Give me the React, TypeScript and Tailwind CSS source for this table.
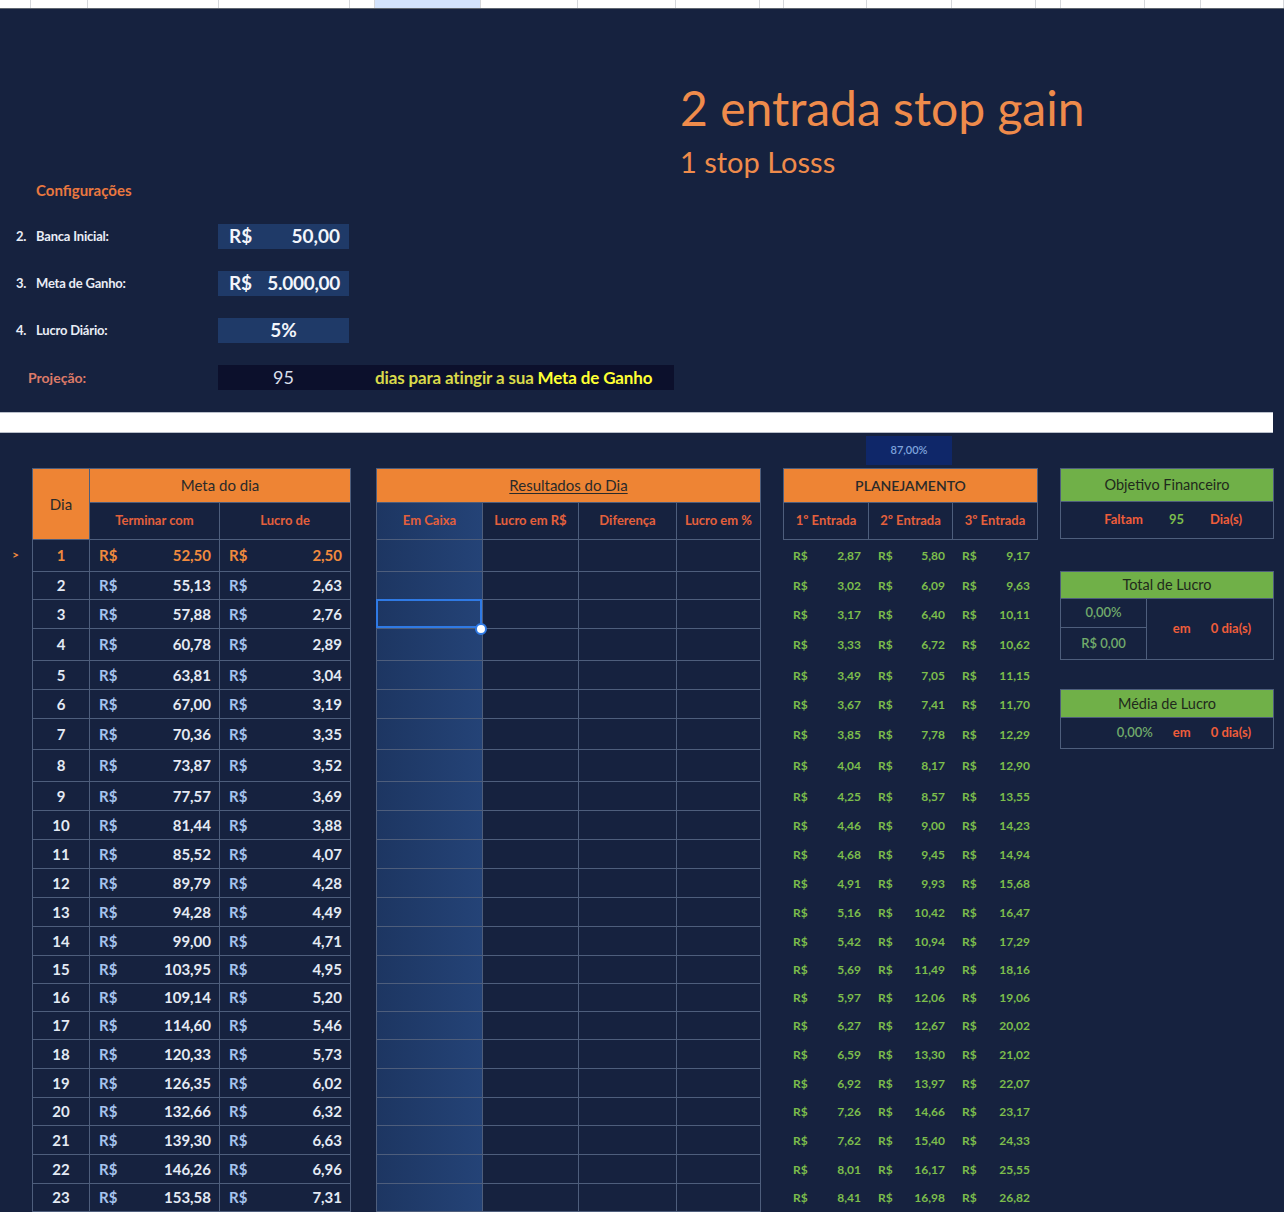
import React from 'react';

// Planilha de gestão de banca: configurações, meta diária, resultados e planejamento.

const rowH = [
  'h-[32px]', 'h-[28px]', 'h-[29px]', 'h-[32px]', 'h-[29px]', 'h-[29px]', 'h-[31px]', 'h-[32px]',
  'h-[29px]', 'h-[29px]', 'h-[29px]', 'h-[29px]', 'h-[29px]', 'h-[29px]', 'h-[28px]', 'h-[28px]',
  'h-[28px]', 'h-[29px]', 'h-[29px]', 'h-[28px]', 'h-[29px]', 'h-[29px]', 'h-[28px]',
];

const terminar = [
  '52,50', '55,13', '57,88', '60,78', '63,81', '67,00', '70,36', '73,87', '77,57', '81,44', '85,52', '89,79',
  '94,28', '99,00', '103,95', '109,14', '114,60', '120,33', '126,35', '132,66', '139,30', '146,26', '153,58',
];
const lucro = [
  '2,50', '2,63', '2,76', '2,89', '3,04', '3,19', '3,35', '3,52', '3,69', '3,88', '4,07', '4,28',
  '4,49', '4,71', '4,95', '5,20', '5,46', '5,73', '6,02', '6,32', '6,63', '6,96', '7,31',
];
const entrada1 = [
  '2,87', '3,02', '3,17', '3,33', '3,49', '3,67', '3,85', '4,04', '4,25', '4,46', '4,68', '4,91',
  '5,16', '5,42', '5,69', '5,97', '6,27', '6,59', '6,92', '7,26', '7,62', '8,01', '8,41',
];
const entrada2 = [
  '5,80', '6,09', '6,40', '6,72', '7,05', '7,41', '7,78', '8,17', '8,57', '9,00', '9,45', '9,93',
  '10,42', '10,94', '11,49', '12,06', '12,67', '13,30', '13,97', '14,66', '15,40', '16,17', '16,98',
];
const entrada3 = [
  '9,17', '9,63', '10,11', '10,62', '11,15', '11,70', '12,29', '12,90', '13,55', '14,23', '14,94', '15,68',
  '16,47', '17,29', '18,16', '19,06', '20,02', '21,02', '22,07', '23,17', '24,33', '25,55', '26,82',
];

const stripCols = [
  'w-[31px]', 'w-[57px]', 'w-[131px]', 'w-[131px]', 'w-[25px]', 'w-[106px]', 'w-[97px]', 'w-[98px]',
  'w-[84px]', 'w-[24px]', 'w-[83px]', 'w-[85px]', 'w-[84px]', 'w-[25px]', 'w-[84px]', 'w-[56px]', 'flex-1',
];

function SheetStrip() {
  return (
    <div className="flex h-[8px] bg-white">
      {stripCols.map((w, i) => (
        <div
          key={i}
          className={`${w} h-full border-r border-[#d5d7db] ${i === 5 ? 'bg-[#d3e3fd]' : ''}`}
        />
      ))}
    </div>
  );
}

function ConfigRow({ num, label, children }: { num: string; label: string; children: React.ReactNode }) {
  return (
    <div className="flex h-[25px] items-center">
      <div className="flex w-[218px] items-center text-[13px] font-bold tracking-[-0.2px] text-[#e9edf6]">
        <span className="w-[36px] pl-[16px]">{num}</span>
        <span>{label}</span>
      </div>
      {children}
    </div>
  );
}

function Header() {
  return (
    <section className="flex h-[403px] flex-col">
      <div className="pl-[680px] pt-[71px] text-[#ef8b4b]">
        <div className="text-[48px] leading-[56px]">2 entrada stop gain</div>
        <div className="mt-[9px] text-[29px] leading-[34px]">1 stop Losss</div>
      </div>
      <div className="mt-[1px] pl-[36px] text-[15px] font-bold leading-[20px] text-[#e9783f]">Configurações</div>
      <div className="mt-[24px] flex flex-col gap-[22px]">
        <ConfigRow num="2." label="Banca Inicial:">
          <div className="flex h-full w-[131px] items-center justify-between bg-[#1f3a68] pl-[11px] pr-[9px] text-[19px] font-bold text-[#f2f5fb]">
            <span>R$</span>
            <span>50,00</span>
          </div>
        </ConfigRow>
        <ConfigRow num="3." label="Meta de Ganho:">
          <div className="flex h-full w-[131px] items-center justify-between bg-[#1f3a68] pl-[11px] pr-[9px] text-[19px] font-bold tracking-[-0.3px] text-[#f2f5fb]">
            <span>R$</span>
            <span>5.000,00</span>
          </div>
        </ConfigRow>
        <ConfigRow num="4." label="Lucro Diário:">
          <div className="flex h-full w-[131px] items-center justify-center bg-[#1f3a68] text-[19px] font-bold text-[#f2f5fb]">
            5%
          </div>
        </ConfigRow>
        <div className="flex h-[25px] items-center">
          <div className="w-[218px] pl-[28px] text-[14px] font-bold text-[#dd7a68]">Projeção:</div>
          <div className="flex h-full w-[456px] items-center bg-[#0c102c]">
            <span className="w-[131px] text-center text-[18px] text-[#d9dfea]">95</span>
            <span className="pl-[26px] text-[17px] font-bold tracking-[-0.15px] text-[#d9d94a]">
              dias para atingir a sua <span className="text-[#ffff33]">Meta de Ganho</span>
            </span>
          </div>
        </div>
      </div>
    </section>
  );
}

function MetaTable() {
  return (
    <div className="w-[319px] border-l border-t border-[#4e5e7c]">
      <div className="flex h-[71px]">
        <div className="flex w-[57px] items-center justify-center border-b border-r border-[#4e5e7c] bg-[#ee8434] text-[15px] text-[#2a2a2a]">
          Dia
        </div>
        <div className="flex flex-col">
          <div className="flex h-[34px] w-[261px] items-center justify-center border-b border-r border-[#4e5e7c] bg-[#ee8434] text-[15px] text-[#2a2a2a]">
            Meta do dia
          </div>
          <div className="flex h-[37px] text-[13px] font-bold text-[#e4603c]">
            <div className="flex w-[130px] items-center justify-center border-b border-r border-[#4e5e7c]">Terminar com</div>
            <div className="flex w-[131px] items-center justify-center border-b border-r border-[#4e5e7c]">Lucro de</div>
          </div>
        </div>
      </div>
      {rowH.map((h, i) => {
        const first = i === 0;
        const money = first ? 'text-[#f08a3e]' : 'text-[#a6c4ee]';
        const value = first ? 'text-[#f08a3e]' : 'text-[#e4eaf4]';
        return (
          <div key={i} className={`flex ${h} text-[15px] font-bold`}>
            <div className={`flex w-[57px] items-center justify-center border-b border-r border-[#4e5e7c] ${value}`}>
              {i + 1}
            </div>
            <div className="flex w-[130px] items-center justify-between border-b border-r border-[#4e5e7c] pl-[9px] pr-[8px]">
              <span className={money}>R$</span>
              <span className={value}>{terminar[i]}</span>
            </div>
            <div className="flex w-[131px] items-center justify-between border-b border-r border-[#4e5e7c] pl-[9px] pr-[8px]">
              <span className={money}>R$</span>
              <span className={value}>{lucro[i]}</span>
            </div>
          </div>
        );
      })}
    </div>
  );
}

function ResultadosTable() {
  return (
    <div className="ml-[25px] w-[385px] border-l border-t border-[#4e5e7c]">
      <div className="flex h-[34px] items-center justify-center border-b border-r border-[#4e5e7c] bg-[#ee8434] text-[15px] text-[#2a2a2a] underline underline-offset-2">
        Resultados do Dia
      </div>
      <div className="flex h-[37px] text-[13px] font-bold text-[#e4603c]">
        <div className="flex w-[106px] items-center justify-center border-b border-r border-[#4e5e7c] bg-linear-to-r from-[#1d3662] to-[#244377]">
          Em Caixa
        </div>
        <div className="flex w-[96px] items-center justify-center border-b border-r border-[#4e5e7c]">Lucro em R$</div>
        <div className="flex w-[98px] items-center justify-center border-b border-r border-[#4e5e7c]">Diferença</div>
        <div className="flex w-[84px] items-center justify-center border-b border-r border-[#4e5e7c]">Lucro em %</div>
      </div>
      {rowH.map((h, i) => (
        <div key={i} className={`flex ${h}`}>
          <div className="relative w-[106px] border-b border-r border-[#4e5e7c] bg-linear-to-r from-[#1d3662] to-[#244377]">
            {i === 2 && (
              <>
                <div className="absolute -left-px -top-px bottom-0 right-0 border-2 border-[#2f7ae5]" />
                <div className="absolute -bottom-[7px] -right-[5px] z-10 h-[12px] w-[12px] rounded-full border-2 border-[#2f7ae5] bg-white" />
              </>
            )}
          </div>
          <div className="w-[96px] border-b border-r border-[#4e5e7c]" />
          <div className="w-[98px] border-b border-r border-[#4e5e7c]" />
          <div className="w-[84px] border-b border-r border-[#4e5e7c]" />
        </div>
      ))}
    </div>
  );
}

function MoneyPair({ value, width }: { value: string; width: string }) {
  return (
    <div className={`flex ${width} items-center justify-between pl-[9px] pr-[8px]`}>
      <span>R$</span>
      <span>{value}</span>
    </div>
  );
}

function PlanejamentoTable() {
  return (
    <div className="ml-[22px] w-[255px]">
      <div className="border-l border-t border-[#4e5e7c]">
        <div className="flex h-[34px] items-center justify-center border-b border-r border-[#4e5e7c] bg-[#ee8434] text-[14px] font-semibold text-[#2a2a2a]">
          PLANEJAMENTO
        </div>
        <div className="flex h-[37px] text-[13px] font-bold text-[#e4603c]">
          <div className="flex w-[85px] items-center justify-center border-b border-r border-[#4e5e7c]">1º Entrada</div>
          <div className="flex w-[84px] items-center justify-center border-b border-r border-[#4e5e7c]">2º Entrada</div>
          <div className="flex w-[85px] items-center justify-center border-b border-r border-[#4e5e7c]">3º Entrada</div>
        </div>
      </div>
      {rowH.map((h, i) => (
        <div key={i} className={`flex ${h} pl-px text-[12px] font-bold text-[#7cbd4c]`}>
          <MoneyPair value={entrada1[i]} width="w-[85px]" />
          <MoneyPair value={entrada2[i]} width="w-[84px]" />
          <MoneyPair value={entrada3[i]} width="w-[85px]" />
        </div>
      ))}
    </div>
  );
}

function ResumoPanel() {
  return (
    <div className="ml-[22px] w-[214px] text-[13px] font-bold">
      <div className="border-x border-[#4e5e7c]">
        <div className="flex h-[34px] items-center justify-center border-y border-[#4e5e7c] bg-[#70b048] text-[14.5px] font-normal text-[#1f2a1c]">
          Objetivo Financeiro
        </div>
        <div className="flex h-[37px] items-center justify-end gap-[26px] border-b border-[#4e5e7c] pr-[31px]">
          <span className="text-[#ef5d3a]">Faltam</span>
          <span className="text-[#7cbd4c]">95</span>
          <span className="text-[#ef5d3a]">Dia(s)</span>
        </div>
      </div>
      <div className="h-[32px]" />
      <div className="border-x border-b border-[#4e5e7c]">
        <div className="flex h-[28px] items-center justify-center border-y border-[#4e5e7c] bg-[#70b048] text-[14.5px] font-normal text-[#1f2a1c]">
          Total de Lucro
        </div>
        <div className="flex h-[60px]">
          <div className="flex w-[86px] flex-col border-r border-[#4e5e7c] font-semibold text-[#71ab6b]">
            <div className="flex h-[29px] items-center justify-center border-b border-[#4e5e7c]">0,00%</div>
            <div className="flex h-[31px] items-center justify-center">R$ 0,00</div>
          </div>
          <div className="flex flex-1 items-center justify-end gap-[20px] pr-[22px] text-[#ef5d3a]">
            <span>em</span>
            <span>0 dia(s)</span>
          </div>
        </div>
      </div>
      <div className="h-[29px]" />
      <div className="border-x border-b border-[#4e5e7c]">
        <div className="flex h-[29px] items-center justify-center border-y border-[#4e5e7c] bg-[#70b048] text-[14.5px] font-normal text-[#1f2a1c]">
          Média de Lucro
        </div>
        <div className="flex h-[30px] items-center justify-end gap-[20px] pr-[22px]">
          <span className="font-semibold text-[#71ab6b]">0,00%</span>
          <span className="text-[#ef5d3a]">em</span>
          <span className="text-[#ef5d3a]">0 dia(s)</span>
        </div>
      </div>
    </div>
  );
}

export default function App() {
  return (
    <div className="h-[1212px] w-[1284px] overflow-hidden bg-[#16223f] font-[family-name:Lato,sans-serif]">
      <SheetStrip />
      <div className="h-px bg-[#5f6670]" />
      <Header />
      <div className="h-[21px] w-[1273px] border-y border-[#b9bfca] bg-white" />
      <div className="h-[35px] pl-[866px] pt-[3px]">
        <div className="flex h-[29px] w-[86px] items-center justify-center bg-[#0f2769] text-[11px] font-semibold text-[#7ea3dc]">
          87,00%
        </div>
      </div>
      <div className="flex">
        <div className="w-[32px] pt-[71px]">
          <div className="flex h-[32px] items-center pl-[12px] text-[12px] font-bold text-[#f08a3e]">&gt;</div>
        </div>
        <MetaTable />
        <ResultadosTable />
        <PlanejamentoTable />
        <ResumoPanel />
      </div>
    </div>
  );
}
